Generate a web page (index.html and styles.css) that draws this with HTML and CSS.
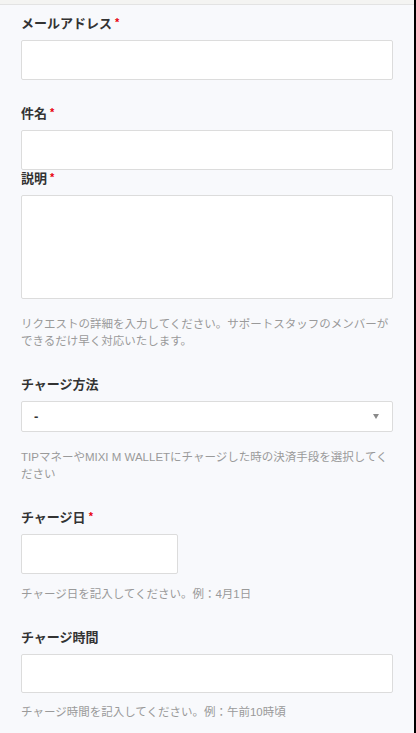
FILE: index.html
```html
<!DOCTYPE html>
<html lang="ja">
<head>
<meta charset="utf-8">
<link rel="stylesheet" href="styles.css">
</head>
<body>
<div class="page">
  <div class="main">
    <div class="topbar"></div>
    <form class="form">
      <label class="field-label">メールアドレス<span class="req">*</span></label>
      <div class="input"></div>

      <label class="field-label gap-24">件名<span class="req">*</span></label>
      <div class="input"></div>

      <label class="field-label gap-tight">説明<span class="req">*</span></label>
      <div class="input textarea"></div>
      <p class="help gap-17">リクエストの詳細を入力してください。サポートスタッフのメンバーができるだけ早く対応いたします。</p>

      <label class="field-label gap-25">チャージ方法</label>
      <div class="input select"><span class="select-value">-</span><svg class="arrow" width="6" height="5" viewBox="0 0 6 5"><polygon points="0,0 6,0 3,5" fill="#8a8a8a"/></svg></div>
      <p class="help gap-17">TIPマネーやMIXI M WALLETにチャージした時の決済手段を選択してください</p>

      <label class="field-label gap-25">チャージ日<span class="req">*</span></label>
      <div class="input short"></div>
      <p class="help gap-12">チャージ日を記入してください。例：4月1日</p>

      <label class="field-label gap-25">チャージ時間</label>
      <div class="input time"></div>
      <p class="help gap-11">チャージ時間を記入してください。例：午前10時頃</p>
    </form>
  </div>
  <div class="edge"></div>
</div>
</body>
</html>
```

FILE: styles.css
```css
html, body {
  margin: 0;
  padding: 0;
  height: 100%;
  overflow: hidden;
}
body {
  font-family: "Liberation Sans", "Noto Sans CJK JP", sans-serif;
  background: #f8f9fc;
}
.page {
  display: flex;
  height: 733px;
}
.main {
  width: 414px;
  background: #f8f9fc;
}
.edge {
  width: 2px;
  background: #000;
}
.topbar {
  height: 4px;
  background: #f4f4f2;
  border-bottom: 1px solid #e3e3e3;
}
.form {
  display: flex;
  flex-direction: column;
  align-items: flex-start;
  padding: 9px 0 0 21px;
  width: 372px;
}
.field-label {
  display: block;
  font-size: 13px;
  line-height: 20px;
  font-weight: bold;
  color: #333;
  margin-bottom: 6px;
}
.req {
  color: #e8000d;
  font-size: 11px;
  margin-left: 3px;
  position: relative;
  top: -2px;
}
.input {
  box-sizing: border-box;
  width: 372px;
  height: 40px;
  background: #fff;
  border: 1px solid #dcdcdc;
  border-radius: 2px;
}
.textarea {
  height: 104px;
}
.select {
  height: 31px;
  display: flex;
  align-items: center;
  justify-content: space-between;
  padding: 0 13px 0 12px;
}
.select-value {
  font-size: 13px;
  color: #333;
  font-weight: bold;
}
.arrow {
  display: block;
}
.short {
  width: 157px;
}
.time {
  height: 39px;
}
.help {
  margin: 0;
  font-size: 11.5px;
  line-height: 17px;
  color: #9a9a9a;
  width: 372px;
}
.gap-24 { margin-top: 24px; }
.gap-25 { margin-top: 25px; }
.gap-tight { margin-top: -1px; }
.gap-17 { margin-top: 17px; }
.gap-12 { margin-top: 12px; }
.gap-11 { margin-top: 11px; }
```
